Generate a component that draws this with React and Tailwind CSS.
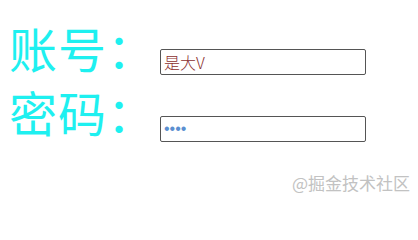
export default function App() {
    return (
        <div className="relative w-[418px] h-[204px] bg-white" style={{fontFamily: '"Noto Sans CJK SC", "Liberation Sans", sans-serif'}}>
            <div className="flex flex-col pt-[12px] pl-[9px]">
                <div className="flex items-end h-[66px]">
                    <span className="text-[48px] leading-[62px] text-[#1ef0f0] w-[151px] tracking-[1px]">账号：</span>
                    <input
                        className="w-[206px] h-[26px] border border-[#555] rounded-[2px] px-[3px] text-[16px] font-light text-[#8b2f2f] outline-none mb-[3px]"
                        defaultValue="是大V"
                    />
                </div>
                <div className="flex items-end h-[64px]">
                    <span className="text-[48px] leading-[62px] text-[#1ef0f0] w-[151px] tracking-[1px]">密码：</span>
                    <input
                        type="password"
                        className="w-[206px] h-[26px] border border-[#555] rounded-[2px] px-[3px] text-[16px] text-[#5b8fd0] outline-none font-['Liberation_Sans',sans-serif]"
                        defaultValue="1234"
                    />
                </div>
            </div>
            <div className="absolute right-[8px] bottom-[9px] text-[17px] text-[#c2c2c2]">@掘金技术社区</div>
        </div>
    );
}
